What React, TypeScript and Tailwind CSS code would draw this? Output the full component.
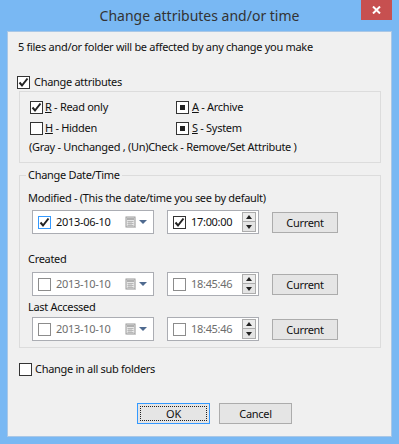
import React from "react";

const FONT = { fontFamily: '"Noto Sans", "Open Sans", sans-serif' };

function Check({ state, disabled, focus }: { state: "on" | "off" | "mixed"; disabled?: boolean; focus?: boolean }) {
  const border = focus ? "border-[#3399ff]" : disabled ? "border-[#8c8c8c]" : "border-[#333333]";
  return (
    <span className={`relative flex h-[13px] w-[13px] shrink-0 items-center justify-center border bg-white ${border}`}>
      {state === "on" && (
        <svg width="11" height="11" viewBox="0 0 11 11">
          <path d="M1.5 5.5 L4 8.5 L9.5 1.5" fill="none" stroke="#222" strokeWidth="2" />
        </svg>
      )}
      {state === "mixed" && <span className="h-[5px] w-[5px] bg-[#222]" />}
    </span>
  );
}

function CalIcon() {
  return (
    <span className="flex items-center gap-[3px]">
      <svg width="11" height="12" viewBox="0 0 11 12">
        <rect x="1" y="1" width="9" height="10" fill="#e8e8e8" stroke="#9a9a9a" />
        <rect x="2" y="2" width="7" height="2" fill="#b0b0b0" />
        <path d="M2.5 5.5h6M2.5 7.5h6M2.5 9.5h6M4 5v5M6 5v5" stroke="#b8b8b8" strokeWidth="1" />
        <path d="M10.5 2v9.5H2" stroke="#c8c8c8" fill="none" />
      </svg>
      <svg width="8" height="5" viewBox="0 0 8 5">
        <path d="M0 0h8L4 4z" fill="#4f6a8f" />
      </svg>
    </span>
  );
}

function Spinner() {
  return (
    <span className="flex h-[20px] w-[14px] flex-col border border-[#acacac]">
      <span className="flex h-1/2 items-center justify-center border-b border-[#acacac] bg-[#ececec]">
        <svg width="6" height="4" viewBox="0 0 6 4"><path d="M0 4h6L3 0z" fill="#222" /></svg>
      </span>
      <span className="flex h-1/2 items-center justify-center bg-[#e4e4e4]">
        <svg width="6" height="4" viewBox="0 0 6 4"><path d="M0 0h6L3 4z" fill="#222" /></svg>
      </span>
    </span>
  );
}

function DateBox({ value, on }: { value: string; on: boolean }) {
  return (
    <div className="flex h-[24px] w-[122px] items-center border border-[#abadb3] bg-white pl-[5px] pr-[6px]">
      <Check state={on ? "on" : "off"} focus={on} disabled={!on} />
      <span className={`ml-[5px] flex-1 ${on ? "text-[#111]" : "text-[#6d6d6d]"}`}>{value}</span>
      <CalIcon />
    </div>
  );
}

function TimeBox({ value, on }: { value: string; on: boolean }) {
  return (
    <div className="flex h-[24px] w-[92px] items-center border border-[#abadb3] bg-white pl-[5px] pr-[2px]">
      <Check state={on ? "on" : "off"} disabled={!on} />
      <span className={`ml-[5px] flex-1 ${on ? "text-[#111]" : "text-[#6d6d6d]"}`}>{value}</span>
      <Spinner />
    </div>
  );
}

function Btn({ label, w = "w-[66px]", primary }: { label: string; w?: string; primary?: boolean }) {
  return (
    <div
      className={`flex h-[21px] ${w} items-center justify-center border ${
        primary ? "border-[#3399ff]" : "border-[#acacac]"
      } bg-[#e5e5e5] p-[2px]`}
    >
      <div className={`flex h-full w-full items-center justify-center ${primary ? "border border-dotted border-[#222]" : ""}`}>
        {label}
      </div>
    </div>
  );
}

function DateRow({ date, time, on }: { date: string; time: string; on: boolean }) {
  return (
    <div className="flex h-[24px] items-center pl-[12px]">
      <DateBox value={date} on={on} />
      <div className="ml-[13px]"><TimeBox value={time} on={on} /></div>
      <div className="ml-[13px] mt-[1px]"><Btn label="Current" /></div>
    </div>
  );
}

export default function App() {
  return (
    <div className="flex h-[444px] w-[399px] flex-col bg-[#79b8f3] text-[11px] leading-[16px] tracking-[-0.3px] text-[#111]" style={FONT}>
      <div className="relative flex h-[31px] shrink-0 items-center justify-center">
        <span className="text-[14px] tracking-normal text-[#333]">Change attributes and/or time</span>
        <div className="absolute right-[7px] top-0 flex h-[20px] w-[31px] items-center justify-center bg-[#c75050]">
          <svg width="9" height="8" viewBox="0 0 9 8">
            <path d="M1 0.5L8 7.5M8 0.5L1 7.5" stroke="#fff" strokeWidth="2" />
          </svg>
        </div>
      </div>
      <div className="mx-[7px] mb-[7px] flex flex-1 flex-col border border-[#a9c7e6] bg-[#f0f0f0]">
        <div className="ml-[10px] mt-[7px] h-[16px]">5 files and/or folder will be affected by any change you make</div>

        <div className="ml-[9px] mt-[19px] flex h-[16px] items-center gap-[4px]">
          <Check state="on" />
          <span>Change attributes</span>
        </div>

        <div className="ml-[11px] mt-[1px] flex h-[72px] w-[362px] flex-col border border-[#dcdcdc] pl-[10px]">
          <div className="mt-[7px] flex h-[16px] items-center">
            <div className="flex w-[146px] items-center gap-[2px]">
              <Check state="on" />
              <span><u>R</u> - Read only</span>
            </div>
            <div className="flex items-center gap-[3px]">
              <Check state="mixed" />
              <span><u>A</u> - Archive</span>
            </div>
          </div>
          <div className="mt-[5px] flex h-[16px] items-center">
            <div className="flex w-[146px] items-center gap-[2px]">
              <Check state="off" />
              <span><u>H</u> - Hidden</span>
            </div>
            <div className="flex items-center gap-[3px]">
              <Check state="mixed" />
              <span><u>S</u> - System</span>
            </div>
          </div>
          <div className="mt-[3px] h-[16px] -ml-[1px]">(Gray - Unchanged , (Un)Check - Remove/Set Attribute )</div>
        </div>

        <div className="relative ml-[11px] mt-[12px] flex h-[173px] w-[362px] flex-col border border-[#dcdcdc] pt-[14px]">
          <span className="absolute -top-[9px] left-[6px] bg-[#f0f0f0] px-[2px]">Change Date/Time</span>
          <div className="ml-[8px] h-[16px]">Modified - (This the date/time you see by default)</div>
          <div className="mt-[4px]"><DateRow date="2013-06-10" time="17:00:00" on /></div>
          <div className="ml-[8px] mt-[17px] h-[16px]">Created</div>
          <div className="mt-[5px]"><DateRow date="2013-10-10" time="18:45:46" on={false} /></div>
          <div className="ml-[8px] mt-[3px] h-[16px]">Last Accessed</div>
          <div className="mt-[2px]"><DateRow date="2013-10-10" time="18:45:46" on={false} /></div>
        </div>

        <div className="ml-[11px] mt-[13px] flex h-[16px] items-center gap-[3px]">
          <Check state="off" />
          <span>Change in all sub folders</span>
        </div>

        <div className="ml-[129px] mt-[26px] flex gap-[9px]">
          <Btn label="OK" w="w-[73px]" primary />
          <Btn label="Cancel" w="w-[73px]" />
        </div>
      </div>
    </div>
  );
}
